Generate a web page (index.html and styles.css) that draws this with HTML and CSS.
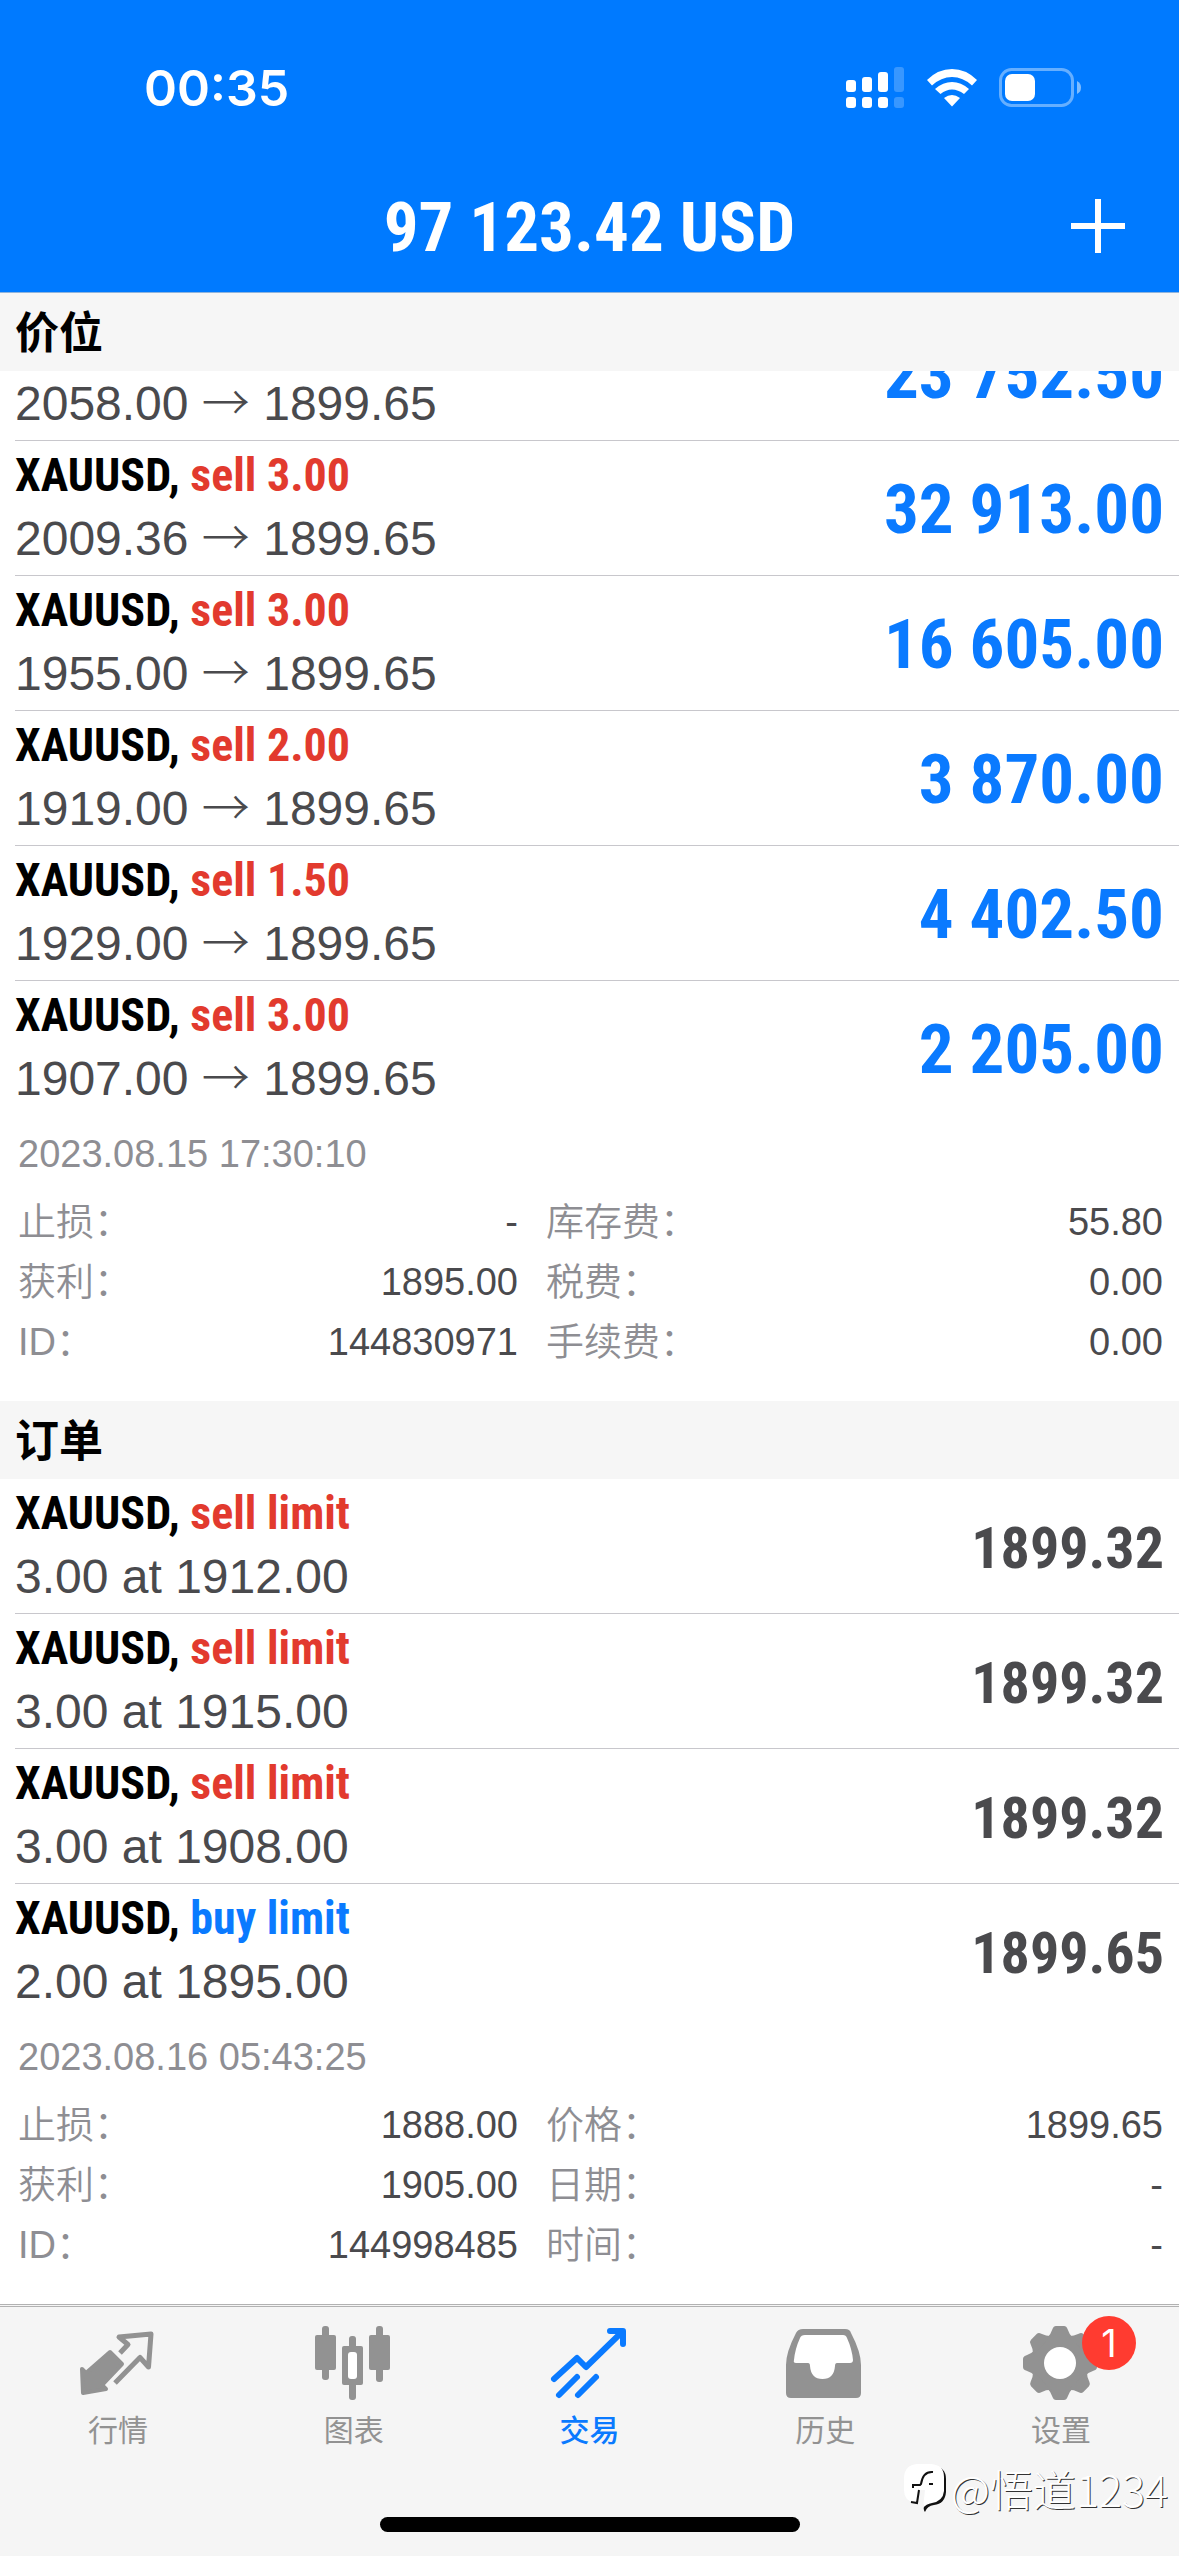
FILE: index.html
```html
<!DOCTYPE html>
<html lang="zh-CN">
<head>
<meta charset="utf-8">
<meta name="viewport" content="width=device-width, initial-scale=1">
<title>交易</title>
<link rel="stylesheet" href="styles.css">
</head>
<body>
<header class="top">
  <div class="status">
    <time class="clock">00:35</time>
    <div class="status-icons">
      <svg class="signal" width="60" height="42" viewBox="0 0 60 42" fill="#fff" aria-hidden="true">
        <rect x="1" y="13" width="10" height="12" rx="3"/><rect x="17" y="10" width="10" height="15" rx="3"/><rect x="33" y="5" width="10" height="20" rx="3"/>
        <rect x="1" y="30" width="10" height="11" rx="3"/><rect x="17" y="30" width="10" height="11" rx="3"/><rect x="33" y="30" width="10" height="11" rx="3"/>
        <g opacity=".22"><rect x="49" y="0" width="10" height="25" rx="3"/><rect x="49" y="30" width="10" height="11" rx="3"/></g>
      </svg>
      <svg class="wifi" width="50" height="38" viewBox="0 0 50 38" fill="#fff" aria-hidden="true">
        <path d="M0 11Q11 0 25 0T50 11L45 16.500Q36 8 25 8T5 16.500Z"/>
        <path d="M8 20Q16 13 25 13T42 20L37 25Q31 20.500 25 20.500T13.500 25Z"/>
        <path d="M17 29Q21 26 25 26T33 29L25 37.500Z"/>
      </svg>
      <svg class="battery" width="83" height="40" viewBox="0 0 83 40" aria-hidden="true">
        <rect x="1.500" y="1.500" width="72" height="36" rx="11" fill="none" stroke="#fff" stroke-opacity=".4" stroke-width="3"/>
        <rect x="6" y="6" width="30" height="27" rx="7" fill="#fff"/>
        <path d="M78 13Q82 15 82 19.500T78 26Z" fill="#fff" opacity=".5"/>
      </svg>
    </div>
  </div>
  <div class="titlebar">
    <h1 class="balance">97 123.42 USD</h1>
    <button class="add" type="button" aria-label="新建">
      <svg width="56" height="56" viewBox="0 0 56 56" stroke="#fff" stroke-width="6" aria-hidden="true"><path d="M28 1V55M1 28H55"/></svg>
    </button>
  </div>
</header>

<main>
  <section>
    <h2 class="section-title">价位</h2>
    <ul class="list">
      <li class="row row-cut">
        <p class="sub">2058.00 <span class="arrow">→</span> 1899.65</p>
        <strong class="profit">23 752.50</strong>
      </li>
      <li class="row">
        <div><p class="name">XAUUSD, <span class="sell">sell 3.00</span></p><p class="sub">2009.36 <span class="arrow">→</span> 1899.65</p></div>
        <strong class="profit">32 913.00</strong>
      </li>
      <li class="row">
        <div><p class="name">XAUUSD, <span class="sell">sell 3.00</span></p><p class="sub">1955.00 <span class="arrow">→</span> 1899.65</p></div>
        <strong class="profit">16 605.00</strong>
      </li>
      <li class="row">
        <div><p class="name">XAUUSD, <span class="sell">sell 2.00</span></p><p class="sub">1919.00 <span class="arrow">→</span> 1899.65</p></div>
        <strong class="profit">3 870.00</strong>
      </li>
      <li class="row">
        <div><p class="name">XAUUSD, <span class="sell">sell 1.50</span></p><p class="sub">1929.00 <span class="arrow">→</span> 1899.65</p></div>
        <strong class="profit">4 402.50</strong>
      </li>
      <li class="row">
        <div><p class="name">XAUUSD, <span class="sell">sell 3.00</span></p><p class="sub">1907.00 <span class="arrow">→</span> 1899.65</p></div>
        <strong class="profit">2 205.00</strong>
      </li>
    </ul>
    <div class="details">
      <time class="date">2023.08.15 17:30:10</time>
      <dl class="facts">
        <div class="fact"><dt>止损：</dt><dd>-</dd></div>
        <div class="fact"><dt>库存费：</dt><dd>55.80</dd></div>
        <div class="fact"><dt>获利：</dt><dd>1895.00</dd></div>
        <div class="fact"><dt>税费：</dt><dd>0.00</dd></div>
        <div class="fact"><dt>ID：</dt><dd>144830971</dd></div>
        <div class="fact"><dt>手续费：</dt><dd>0.00</dd></div>
      </dl>
    </div>
  </section>

  <section>
    <h2 class="section-title">订单</h2>
    <ul class="list">
      <li class="row">
        <div><p class="name">XAUUSD, <span class="sell">sell limit</span></p><p class="sub">3.00 at 1912.00</p></div>
        <strong class="price">1899.32</strong>
      </li>
      <li class="row">
        <div><p class="name">XAUUSD, <span class="sell">sell limit</span></p><p class="sub">3.00 at 1915.00</p></div>
        <strong class="price">1899.32</strong>
      </li>
      <li class="row">
        <div><p class="name">XAUUSD, <span class="sell">sell limit</span></p><p class="sub">3.00 at 1908.00</p></div>
        <strong class="price">1899.32</strong>
      </li>
      <li class="row">
        <div><p class="name">XAUUSD, <span class="buy">buy limit</span></p><p class="sub">2.00 at 1895.00</p></div>
        <strong class="price">1899.65</strong>
      </li>
    </ul>
    <div class="details">
      <time class="date">2023.08.16 05:43:25</time>
      <dl class="facts">
        <div class="fact"><dt>止损：</dt><dd>1888.00</dd></div>
        <div class="fact"><dt>价格：</dt><dd>1899.65</dd></div>
        <div class="fact"><dt>获利：</dt><dd>1905.00</dd></div>
        <div class="fact"><dt>日期：</dt><dd>-</dd></div>
        <div class="fact"><dt>ID：</dt><dd>144998485</dd></div>
        <div class="fact"><dt>时间：</dt><dd>-</dd></div>
      </dl>
    </div>
  </section>
</main>

<footer class="bottom">
  <nav class="tabs">
    <a class="tab" href="#quotes">
      <svg class="icon" viewBox="0 0 80 80" stroke="currentColor" stroke-linejoin="round" aria-hidden="true">
        <path d="M32 30L44 42L24 63L28 67L5 71L4 47L8 51Z" fill="currentColor" stroke-width="4"/>
        <path d="M42 31L50 22.500L41 15L73 12L70.500 45L62 35.500L37 61" fill="none" stroke-width="5"/>
      </svg>
      <span>行情</span>
    </a>
    <a class="tab" href="#chart">
      <svg class="icon" viewBox="0 0 80 80" fill="currentColor" aria-hidden="true">
        <rect x="1" y="13" width="21" height="35" rx="2"/><rect x="8" y="4" width="7" height="54" rx="3"/>
        <rect x="28" y="24" width="21" height="39" rx="2"/><rect x="35" y="14" width="7" height="64" rx="3"/>
        <rect x="34" y="30" width="9" height="27" rx="3" fill="#fff"/>
        <rect x="55" y="13" width="21" height="35" rx="2"/><rect x="62" y="4" width="7" height="56" rx="3"/>
      </svg>
      <span>图表</span>
    </a>
    <a class="tab active" href="#trade" aria-current="page">
      <svg class="icon" viewBox="0 0 80 80" fill="none" stroke="currentColor" stroke-width="6" stroke-linecap="round" stroke-linejoin="round" aria-hidden="true">
        <path d="M5 57L28 36L37 45L73 10M61 9H74V22M10 73L28 55M29 73L47 55"/>
      </svg>
      <span>交易</span>
    </a>
    <a class="tab" href="#history">
      <svg class="icon" viewBox="0 0 80 80" aria-hidden="true">
        <path d="M18 7H60Q65 7 66 11Q76 30 76 43V71Q76 76 71 76H6Q1 76 1 71V43Q1 30 11 11Q13 7 18 7Z" fill="currentColor"/>
        <path d="M20 13H58Q61 13 62 16Q67 27 68 38Q68 41 65 41H52Q50 41 50 44Q49 57 37.500 57T25 44Q25 41 23 41H11Q8 41 9 38Q10 27 15 16Q16 13 20 13Z" fill="#fff"/>
      </svg>
      <span>历史</span>
    </a>
    <a class="tab" href="#settings">
      <svg class="icon" viewBox="0 0 80 80" fill="currentColor" aria-hidden="true">
        <defs><path id="tooth" d="M-13 -25Q-9 -29 -7.500 -34Q-6.500 -37 -4 -37H4Q6.500 -37 7.500 -34Q9 -29 13 -25Z"/></defs>
        <g transform="translate(39 41)">
          <circle r="29"/>
          <use href="#tooth"/><use href="#tooth" transform="rotate(45)"/><use href="#tooth" transform="rotate(90)"/><use href="#tooth" transform="rotate(135)"/>
          <use href="#tooth" transform="rotate(180)"/><use href="#tooth" transform="rotate(225)"/><use href="#tooth" transform="rotate(270)"/><use href="#tooth" transform="rotate(315)"/>
          <circle r="16" fill="#fff"/>
        </g>
      </svg>
      <span>设置</span>
      <span class="badge">1</span>
    </a>
  </nav>
  <div class="home-bar"></div>
  <div class="watermark">
    <svg width="44" height="50" viewBox="0 0 44 50" aria-hidden="true">
      <path d="M30 3Q43 4 43 16V29Q42 41 31 42Q24 43 22 49Q20 47 21 41Z" fill="#111"/>
      <path d="M14 1H28Q41 2 41 14V28Q40 38 29 40Q23 41 20 45L22 27H15L12 40Q1 38 1 27V14Q2 2 14 1Z" fill="#fff"/>
      <path d="M30 9Q20 8 18 21L17 22H10V25M26 21H30M16 27L14 40L8 39" fill="none" stroke="#111" stroke-width="2"/>
    </svg>
    <span>@悟道1234</span>
  </div>
</footer>
</body>
</html>
```
FILE: styles.css
```css
* { box-sizing: border-box; }

body {
  margin: 0;
  min-height: 100vh;
  display: flex;
  flex-direction: column;
  background: #fff;
  color: #000;
  font-family: "Liberation Sans", "Noto Sans CJK SC", sans-serif;
}

h1, h2, p, ul, dl, dd { margin: 0; padding: 0; }
ul { list-style: none; }

main { flex: 1; }

/* header */
.top {
  height: 293px;
  background: #007aff;
  border-bottom: 1px solid #8fb4dd;
  color: #fff;
}

.status {
  display: flex;
  justify-content: space-between;
  align-items: center;
  padding: 56px 97px 0 144px;
  height: 120px;
}

.clock {
  font: 600 50px/64px Inter, sans-serif;
}

.status-icons {
  display: flex;
  align-items: center;
  gap: 22px;
}

.titlebar {
  display: grid;
  grid-template-columns: 1fr auto 1fr;
  align-items: center;
  height: 160px;
  padding: 52px 53px 0;
}

.balance {
  grid-column: 2;
  padding-top: 4px;
  font: bold 69px/96px "Roboto Condensed", "Liberation Sans Narrow", sans-serif;
}

.add {
  justify-self: end;
  display: flex;
  padding: 0;
  border: 0;
  background: none;
}

/* lists */
.section-title {
  height: 78px;
  padding-left: 15px;
  background: #f6f6f6;
  font: bold 44px/74px "Noto Sans CJK SC", sans-serif;
}

.row {
  display: flex;
  justify-content: space-between;
  align-items: center;
  height: 135px;
  margin-left: 15px;
  padding: 0 15px 2px 0;
  border-bottom: 1px solid #c8c7cc;
}

.row:last-child { border-bottom-color: transparent; }

/* row scrolled partly under the section title */
.row-cut {
  height: 70px;
  align-items: flex-end;
  overflow: hidden;
}

.row-cut .sub { padding-bottom: 3px; }

.name {
  font: bold 46px/63px "Roboto Condensed", "Liberation Sans Narrow", sans-serif;
}

.sub {
  color: #4a4a4d;
  font-size: 48px;
  line-height: 63px;
}

.arrow {
  font-family: "Noto Sans CJK SC", sans-serif;
  font-weight: 300;
  line-height: 1;
}

.sell { color: #e23a2e; }
.buy { color: #0a7aff; }

.profit, .price {
  padding-top: 6px;
  font-family: "Roboto Condensed", "Liberation Sans Narrow", sans-serif;
  font-weight: bold;
  line-height: 126px;
}

.profit { color: #0a7aff; font-size: 69px; }
.price { color: #4a4a4d; font-size: 58px; }

/* expanded item */
.details {
  padding: 8px 16px 29px 18px;
  font-size: 38px;
  line-height: 60px;
  color: #8e8e93;
}

.date { display: block; margin-bottom: 8px; }

.facts {
  display: grid;
  grid-template-columns: 500fr 617fr;
  column-gap: 28px;
}

.fact {
  display: flex;
  justify-content: space-between;
  height: 60px;
}

.fact dt { font-weight: 350; }
.fact dd { color: #4a4a4d; }

/* tab bar */
.bottom {
  position: relative;
  height: 252px;
  background: #f5f5f5;
  border-top: 3px double #b2b2b2;
}

.tabs {
  display: grid;
  grid-template-columns: repeat(5, 1fr);
}

.tab {
  position: relative;
  display: flex;
  flex-direction: column;
  align-items: center;
  padding-top: 15px;
  color: #929292;
  font: 30px/40px "Noto Sans CJK SC", sans-serif;
  text-decoration: none;
}

.tab.active { color: #0a7aff; font-weight: 500; }

.icon {
  width: 80px;
  height: 80px;
  margin-bottom: 6px;
}

.badge {
  position: absolute;
  top: 9px;
  left: calc(50% + 21px);
  width: 54px;
  height: 54px;
  border-radius: 50%;
  background: #ff3b30;
  color: #fff;
  font: 38px/54px Inter, sans-serif;
  text-align: center;
}

.home-bar {
  position: absolute;
  left: 50%;
  bottom: 24px;
  width: 420px;
  height: 15px;
  margin-left: -210px;
  border-radius: 8px;
  background: #000;
}

.watermark {
  position: absolute;
  right: 11px;
  bottom: 40px;
  display: flex;
  align-items: center;
  gap: 4px;
  color: #fff;
  font: 300 43px/56px "Noto Sans CJK SC", sans-serif;
  text-shadow: 1px 1px 0 #333;
}
```
